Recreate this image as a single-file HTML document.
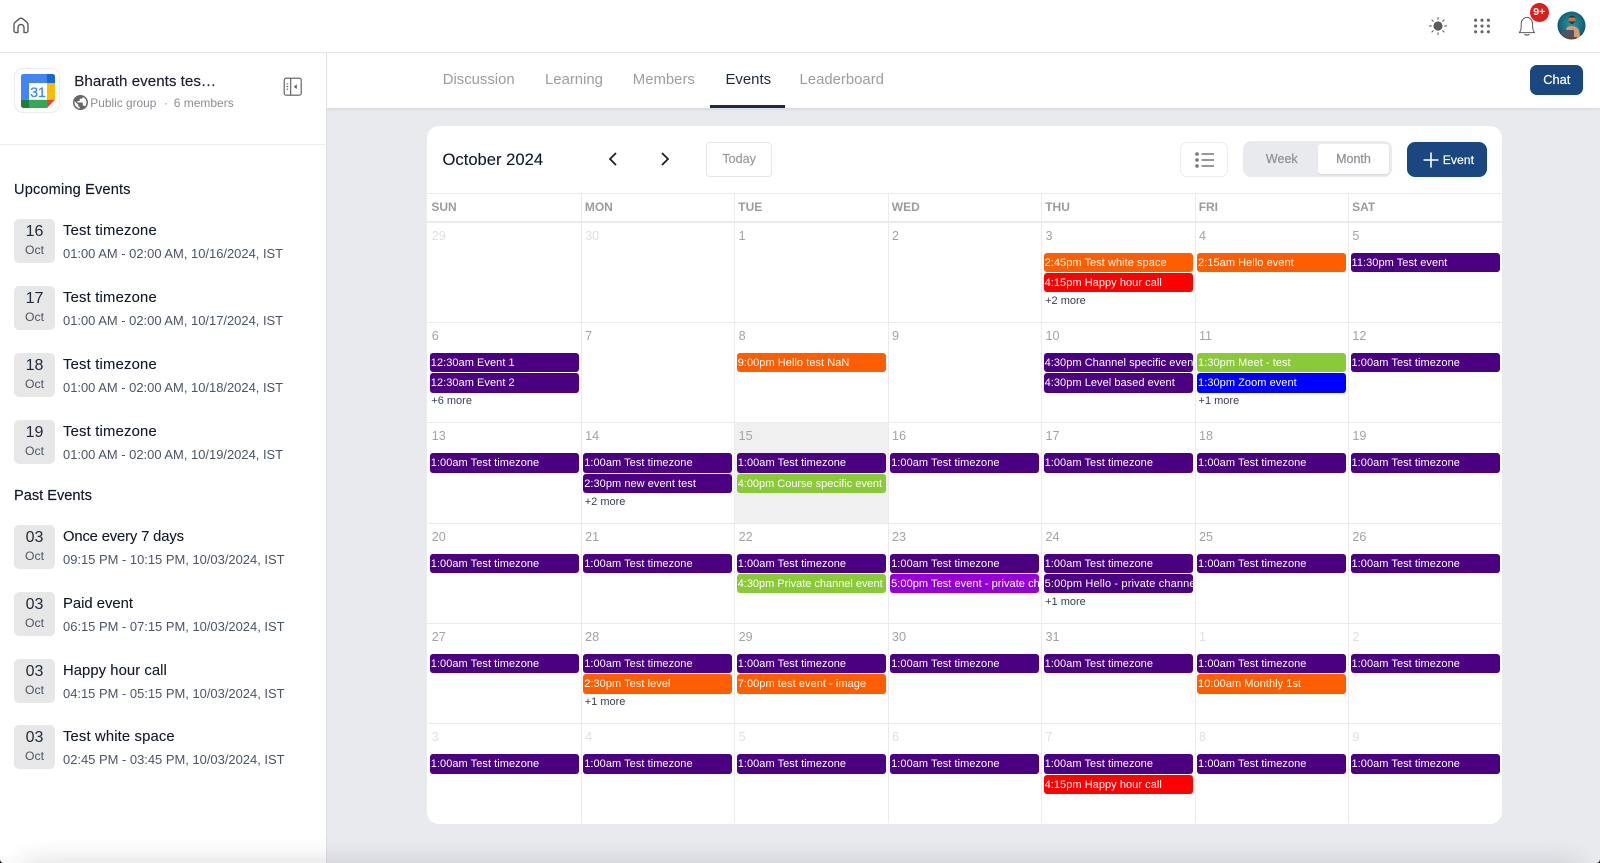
<!DOCTYPE html>
<html lang="en">
<head>
<meta charset="utf-8">
<title>Events</title>
<style>
*{box-sizing:border-box}
html,body{margin:0;padding:0;width:1600px;height:863px;overflow:hidden}
body{background:#e9eaee;position:relative;font-family:"Liberation Sans",sans-serif;color:#111827}
.abs,.abs-t{position:absolute}
.abs-t{white-space:nowrap}
#top{position:absolute;left:0;top:0;width:1600px;height:53px;background:#fff;border-bottom:1px solid #e4e4e6}
#side{position:absolute;left:0;top:53px;width:327px;height:810px;background:#fff;border-right:1px solid #dfe0e3}
#tabs{position:absolute;left:327px;top:53px;width:1273px;height:55px;background:#fff;box-shadow:0 1px 3px rgba(0,0,0,.1)}
.tab{position:absolute;top:79.6px;transform:translateY(-50%);font-size:14.9px;color:#9b9da3;white-space:nowrap}
.hd{position:absolute;left:14px;font-size:14.6px;line-height:18px;color:#111827;-webkit-text-stroke:.15px #111827}
.it{position:absolute;left:14px;width:300px;height:44px}
.it .b{position:absolute;left:0;top:0;width:41px;height:44px;background:#e7e7e8;border-radius:5px;text-align:center}
.it .n{position:absolute;left:0;width:41px;top:3px;font-size:16px;line-height:20px;color:#1f2937}
.it .o{position:absolute;left:0;width:41px;top:24px;font-size:12.2px;line-height:15px;color:#4b5563}
.it .t{position:absolute;left:49px;top:3px;font-size:14.8px;line-height:19px;color:#111827;white-space:nowrap;-webkit-text-stroke:.1px #111827}
.it .t.z{letter-spacing:.2px}
.it .d{position:absolute;left:49px;top:27px;font-size:12.95px;line-height:16px;color:#4b5563;white-space:nowrap}
#card{position:absolute;left:427.4px;top:126px;width:1074.3px;height:697.5px;background:#fff;border-radius:12px;overflow:hidden}
.dow{position:absolute;top:67.2px;height:28.5px;width:153.46px;box-shadow:inset 1px 0 #ebebeb,inset 0 1px #ebebeb,inset 0 -1px #ebebeb;font-size:12px;font-weight:700;color:#9c9c9c;line-height:28px;padding-left:4px}
.dow:first-child{box-shadow:inset 0 1px #ebebeb,inset 0 -1px #ebebeb}
#grid{position:absolute;left:0;top:95.7px;width:1074.3px;display:grid;grid-template-columns:repeat(7,153.46px);grid-auto-rows:100.3px}
.c{position:relative;box-shadow:inset 1px 0 #ebebeb,inset 0 1px #ebebeb;padding:31px 1.9px 0 2.4px;overflow:hidden}
.c:nth-child(7n+1){box-shadow:inset 0 1px #ebebeb}
.c.today{background:#f0f0f0}
.c>b{position:absolute;left:4.3px;top:0;font-weight:400;font-size:12.6px;line-height:28px;color:#a3a3a3}
.c>b.x{color:#e0e0e0}
.e{height:19.4px;line-height:20px;margin-bottom:1px;border-radius:3px;color:#fff;font-size:11px;letter-spacing:.05px;padding-left:1px;white-space:nowrap;overflow:hidden}
.p{background:#4b0082}.g{background:#8aca39}.r{background:#ff0000}.a{background:#ff5e00}.u{background:#0000ff}.v{background:#9400d3}
.m{font-size:11px;line-height:13px;color:#374151;padding-left:1.5px;margin-top:2.5px}
.btn{position:absolute;border-radius:7px}
#clip{position:absolute;left:0;top:0;width:1600px;height:863px;overflow:hidden;pointer-events:none}
#fade{position:absolute;left:22px;width:1556px;top:868px;height:30px;box-shadow:0 0 26px 6px rgba(40,40,60,.16);border-radius:20px}
</style>
</head>
<body>
<div id="tabs"></div>
<div id="top"></div>
<div id="side"></div>

<svg class="abs" style="left:0;top:0" width="44" height="52" viewBox="0 0 44 52"><path d="M18 32.6H16a2 2 0 0 1-2-2V24.6a3 3 0 0 1 1.2-2.4L19.4 18.7a2.6 2.6 0 0 1 3.2 0L26.8 22.2a3 3 0 0 1 1.2 2.4V30.6a2 2 0 0 1-2 2H24V27.5a3 3 0 0 0-6 0Z" fill="none" stroke="#5a5a5a" stroke-width="1.4" stroke-linejoin="round"/></svg>

<svg class="abs" style="left:1427px;top:15px" width="22" height="22" viewBox="0 0 22 22"><circle cx="11" cy="11" r="4.6" fill="#5c5c5c"/><g stroke="#6a6a6a" stroke-width="1.2" stroke-linecap="round"><path d="M11 2.6V4.2M11 17.8V19.4M2.6 11H4.2M17.8 11H19.4M5 5L6.2 6.2M15.8 15.8L17 17M5 17L6.2 15.8M15.8 6.2L17 5"/></g></svg>
<svg class="abs" style="left:1472px;top:15.5px" width="20" height="20" viewBox="0 0 20 20"><g fill="#666"><circle cx="3.6" cy="4.2" r="1.55"/><circle cx="10" cy="4.2" r="1.55"/><circle cx="16.4" cy="4.2" r="1.55"/><circle cx="3.6" cy="10" r="1.55"/><circle cx="10" cy="10" r="1.55"/><circle cx="16.4" cy="10" r="1.55"/><circle cx="3.6" cy="15.8" r="1.55"/><circle cx="10" cy="15.8" r="1.55"/><circle cx="16.4" cy="15.8" r="1.55"/></g></svg>
<svg class="abs" style="left:1514px;top:13px" width="26" height="26" viewBox="0 0 26 26"><path d="M5.3 19.6C6.6 18 7.2 16.7 7.2 13.5V10.8C7.2 7.6 9.7 4.4 12.9 4.4S18.6 7.6 18.6 10.8V13.5C18.6 16.7 19.2 18 20.6 19.6Z" fill="none" stroke="#5c5c5c" stroke-width="1" stroke-linejoin="round"/><path d="M10.8 21.6C11.8 22.1 14 22.1 15 21.6" fill="none" stroke="#5c5c5c" stroke-width="1.2" stroke-linecap="round"/></svg>
<div class="abs" style="left:1529.8px;top:2.5px;width:19px;height:19px;border-radius:50%;background:#db1f1a;color:#fff;font-size:10.5px;font-weight:700;line-height:19px;text-align:center">9+</div>
<svg class="abs" style="left:1557px;top:11px" width="29" height="29" viewBox="0 0 29 29"><defs><radialGradient id="av" cx=".5" cy=".45" r=".6"><stop offset="0" stop-color="#2b96a8"/><stop offset=".75" stop-color="#116478"/><stop offset="1" stop-color="#0d2c3c"/></radialGradient><clipPath id="ac"><circle cx="14.5" cy="14.5" r="14"/></clipPath></defs><circle cx="14.5" cy="14.5" r="14" fill="url(#av)"/><g clip-path="url(#ac)"><path d="M9 29V19C9 16.5 11 15 14.5 15S21 16.5 22 19L24 29Z" fill="#d39a78"/><circle cx="15" cy="8.5" r="3.6" fill="#b9784f"/><path d="M11.2 8C11.2 3.8 18.8 3.6 18.8 8L18 6.5H12Z" fill="#3c2a20"/><path d="M11.8 9.5C12.6 14 17.4 14 18.2 9.5L17 10.5H13Z" fill="#3a2a22"/><rect x="4" y="19" width="13" height="7.5" rx="1" fill="#4a5668"/><rect x="3" y="26" width="17" height="3" fill="#7a3f2a"/></g></svg>

<!-- group header -->
<div class="abs" style="left:14.3px;top:68px;width:45.4px;height:45.4px;background:#fff;border:1px solid #ececec;border-radius:9px"></div>
<svg class="abs" style="left:21px;top:73.7px" width="34" height="34" viewBox="0 0 34 34"><path d="M2.5 0H26V9H8V25.7H0V2.5A2.5 2.5 0 0 1 2.5 0Z" fill="#4285f4"/><path d="M26 0H31.5A2.5 2.5 0 0 1 34 2.5V9H26Z" fill="#1967d2"/><rect x="26" y="9" width="8" height="16.7" fill="#fbbc04"/><rect x="8" y="25.7" width="18" height="8.3" fill="#34a853"/><path d="M0 25.7H8V34H2.5A2.5 2.5 0 0 1 0 31.5Z" fill="#188038"/><path d="M26 25.7H34L26 34Z" fill="#ea4335"/><rect x="8" y="9" width="18" height="16.7" fill="#fff"/><text x="17" y="22.8" text-anchor="middle" font-family="Liberation Sans, sans-serif" font-size="14" font-weight="400" fill="#4285f4" stroke="#4285f4" stroke-width=".3">31</text></svg>
<div class="abs-t" style="left:74.3px;top:72px;font-size:15.2px;line-height:20px;color:#1a1f2b;-webkit-text-stroke:.15px #1a1f2b">Bharath events tes…</div>
<svg class="abs" style="left:73.3px;top:95.3px" width="15" height="15" viewBox="2 2 20 20"><path fill="#666" d="M12 2C6.48 2 2 6.48 2 12s4.48 10 10 10 10-4.48 10-10S17.52 2 12 2zm-1 17.93c-3.95-.49-7-3.85-7-7.93 0-.62.08-1.21.21-1.79L9 15v1c0 1.1.9 2 2 2v1.93zm6.9-2.54c-.26-.81-1-1.39-1.9-1.39h-1v-3c0-.55-.45-1-1-1H8v-2h2c.55 0 1-.45 1-1V7h2c1.1 0 2-.9 2-2v-.41c2.93 1.19 5 4.06 5 7.41 0 2.08-.8 3.97-2.1 5.39z"/></svg>
<div class="abs-t" style="left:90.3px;top:95px;font-size:11.9px;line-height:16px;color:#8a8d93">Public group</div>
<div class="abs-t" style="left:164px;top:95px;font-size:11.9px;line-height:16px;color:#8a8d93">·</div>
<div class="abs-t" style="left:173.7px;top:95px;font-size:12px;line-height:16px;color:#8a8d93">6 members</div>
<svg class="abs" style="left:283px;top:76.5px" width="20" height="20" viewBox="0 0 20 20"><rect x="1.2" y="1.2" width="17" height="17" rx="2" fill="none" stroke="#5a5a5a" stroke-width="1.1"/><path d="M7.7 1.2V18.2" stroke="#5a5a5a" stroke-width="1.1"/><path d="M3.6 7H5.2M3.6 9.6H5.2M3.6 12.2H5.2" stroke="#5a5a5a" stroke-width="1.1"/><path d="M13.8 7.4V12L10.8 9.7Z" fill="#5a5a5a"/></svg>
<div class="abs" style="left:0;top:144px;width:326px;height:1px;background:#ececee"></div>

<div class="hd" style="top:180.5px;letter-spacing:.15px">Upcoming Events</div>
<div class="it" style="top:219px"><div class="b"><div class="n">16</div><div class="o">Oct</div></div><div class="t z">Test timezone</div><div class="d">01:00 AM - 02:00 AM, 10/16/2024, IST</div></div>
<div class="it" style="top:286px"><div class="b"><div class="n">17</div><div class="o">Oct</div></div><div class="t z">Test timezone</div><div class="d">01:00 AM - 02:00 AM, 10/17/2024, IST</div></div>
<div class="it" style="top:353px"><div class="b"><div class="n">18</div><div class="o">Oct</div></div><div class="t z">Test timezone</div><div class="d">01:00 AM - 02:00 AM, 10/18/2024, IST</div></div>
<div class="it" style="top:419.6px"><div class="b"><div class="n">19</div><div class="o">Oct</div></div><div class="t z">Test timezone</div><div class="d">01:00 AM - 02:00 AM, 10/19/2024, IST</div></div>
<div class="hd" style="top:486.5px">Past Events</div>
<div class="it" style="top:525px"><div class="b"><div class="n">03</div><div class="o">Oct</div></div><div class="t" style="letter-spacing:-.15px">Once every 7 days</div><div class="d">09:15 PM - 10:15 PM, 10/03/2024, IST</div></div>
<div class="it" style="top:592px"><div class="b"><div class="n">03</div><div class="o">Oct</div></div><div class="t">Paid event</div><div class="d">06:15 PM - 07:15 PM, 10/03/2024, IST</div></div>
<div class="it" style="top:658.5px"><div class="b"><div class="n">03</div><div class="o">Oct</div></div><div class="t" style="letter-spacing:.07px">Happy hour call</div><div class="d">04:15 PM - 05:15 PM, 10/03/2024, IST</div></div>
<div class="it" style="top:725px"><div class="b"><div class="n">03</div><div class="o">Oct</div></div><div class="t" style="letter-spacing:.15px">Test white space</div><div class="d">02:45 PM - 03:45 PM, 10/03/2024, IST</div></div>

<!-- tabs -->
<div class="tab" style="left:442.7px">Discussion</div>
<div class="tab" style="left:545px">Learning</div>
<div class="tab" style="left:632.8px">Members</div>
<div class="tab" style="left:725.5px;color:#1f2937">Events</div>
<div class="tab" style="left:799.5px">Leaderboard</div>
<div class="abs" style="left:710.3px;top:105px;width:74.5px;height:2.5px;background:#1c2b41"></div>
<div class="btn" style="left:1530.3px;top:65.3px;width:53px;height:29.7px;background:#1a4780;color:#fff;font-size:12.8px;line-height:29px;text-align:center;-webkit-text-stroke:.2px #fff">Chat</div>

<!-- calendar -->
<div id="card">
<div class="dow" style="left:0">SUN</div>
<div class="dow" style="left:153.46px">MON</div>
<div class="dow" style="left:306.92px">TUE</div>
<div class="dow" style="left:460.38px">WED</div>
<div class="dow" style="left:613.84px">THU</div>
<div class="dow" style="left:767.3px">FRI</div>
<div class="dow" style="left:920.76px">SAT</div>
<div id="grid">
<div class="c"><b class="x">29</b></div>
<div class="c"><b class="x">30</b></div>
<div class="c"><b>1</b></div>
<div class="c"><b>2</b></div>
<div class="c"><b>3</b><div class="e a">2:45pm Test white space</div><div class="e r">4:15pm Happy hour call</div><div class="m">+2 more</div></div>
<div class="c"><b>4</b><div class="e a">2:15am Hello event</div></div>
<div class="c"><b>5</b><div class="e p">11:30pm Test event</div></div>

<div class="c"><b>6</b><div class="e p">12:30am Event 1</div><div class="e p">12:30am Event 2</div><div class="m">+6 more</div></div>
<div class="c"><b>7</b></div>
<div class="c"><b>8</b><div class="e a">9:00pm Hello test NaN</div></div>
<div class="c"><b>9</b></div>
<div class="c"><b>10</b><div class="e p">4:30pm Channel specific event</div><div class="e p">4:30pm Level based event</div></div>
<div class="c"><b>11</b><div class="e g">1:30pm Meet - test</div><div class="e u">1:30pm Zoom event</div><div class="m">+1 more</div></div>
<div class="c"><b>12</b><div class="e p">1:00am Test timezone</div></div>

<div class="c"><b>13</b><div class="e p">1:00am Test timezone</div></div>
<div class="c"><b>14</b><div class="e p">1:00am Test timezone</div><div class="e p">2:30pm new event test</div><div class="m">+2 more</div></div>
<div class="c today"><b>15</b><div class="e p">1:00am Test timezone</div><div class="e g" style="letter-spacing:-.02px">4:00pm Course specific event</div></div>
<div class="c"><b>16</b><div class="e p">1:00am Test timezone</div></div>
<div class="c"><b>17</b><div class="e p">1:00am Test timezone</div></div>
<div class="c"><b>18</b><div class="e p">1:00am Test timezone</div></div>
<div class="c"><b>19</b><div class="e p">1:00am Test timezone</div></div>

<div class="c"><b>20</b><div class="e p">1:00am Test timezone</div></div>
<div class="c"><b>21</b><div class="e p">1:00am Test timezone</div></div>
<div class="c"><b>22</b><div class="e p">1:00am Test timezone</div><div class="e g" style="letter-spacing:-.02px">4:30pm Private channel event</div></div>
<div class="c"><b>23</b><div class="e p">1:00am Test timezone</div><div class="e v">5:00pm Test event - private channel</div></div>
<div class="c"><b>24</b><div class="e p">1:00am Test timezone</div><div class="e p" style="letter-spacing:.15px">5:00pm Hello - private channel</div><div class="m">+1 more</div></div>
<div class="c"><b>25</b><div class="e p">1:00am Test timezone</div></div>
<div class="c"><b>26</b><div class="e p">1:00am Test timezone</div></div>

<div class="c"><b>27</b><div class="e p">1:00am Test timezone</div></div>
<div class="c"><b>28</b><div class="e p">1:00am Test timezone</div><div class="e a">2:30pm Test level</div><div class="m">+1 more</div></div>
<div class="c"><b>29</b><div class="e p">1:00am Test timezone</div><div class="e a">7:00pm test event - image</div></div>
<div class="c"><b>30</b><div class="e p">1:00am Test timezone</div></div>
<div class="c"><b>31</b><div class="e p">1:00am Test timezone</div></div>
<div class="c"><b class="x">1</b><div class="e p">1:00am Test timezone</div><div class="e a">10:00am Monthly 1st</div></div>
<div class="c"><b class="x">2</b><div class="e p">1:00am Test timezone</div></div>

<div class="c"><b class="x">3</b><div class="e p">1:00am Test timezone</div></div>
<div class="c"><b class="x">4</b><div class="e p">1:00am Test timezone</div></div>
<div class="c"><b class="x">5</b><div class="e p">1:00am Test timezone</div></div>
<div class="c"><b class="x">6</b><div class="e p">1:00am Test timezone</div></div>
<div class="c"><b class="x">7</b><div class="e p">1:00am Test timezone</div><div class="e r">4:15pm Happy hour call</div></div>
<div class="c"><b class="x">8</b><div class="e p">1:00am Test timezone</div></div>
<div class="c"><b class="x">9</b><div class="e p">1:00am Test timezone</div></div>
</div>
</div>

<div class="abs-t" style="left:442.5px;top:150px;font-size:16.6px;line-height:20px;color:#111827;-webkit-text-stroke:.1px #111827">October 2024</div>
<svg class="abs" style="left:605px;top:150px" width="16" height="18" viewBox="0 0 16 18"><path d="M11 3L5 9L11 15" fill="none" stroke="#1a1f2b" stroke-width="1.8"/></svg>
<svg class="abs" style="left:657px;top:150px" width="16" height="18" viewBox="0 0 16 18"><path d="M5 3L11 9L5 15" fill="none" stroke="#1a1f2b" stroke-width="1.8"/></svg>
<div class="abs" style="left:706px;top:142.3px;width:66.3px;height:34.4px;border:1px solid #e6e6e6;border-radius:4px;color:#96989d;font-size:12.6px;line-height:32px;text-align:center;-webkit-text-stroke:.15px #96989d">Today</div>

<div class="abs" style="left:1180.3px;top:142px;width:48px;height:35px;border:1px solid #ececec;border-radius:7px;background:#fff"></div>
<svg class="abs" style="left:1194px;top:151px" width="22" height="18" viewBox="0 0 22 18"><g fill="#777"><circle cx="3" cy="3" r="1.8"/><circle cx="3" cy="9" r="1.8"/><circle cx="3" cy="15" r="1.8"/></g><path d="M7.5 3H20M7.5 9H20M7.5 15H20" stroke="#777" stroke-width="1.5"/></svg>

<div class="abs" style="left:1243.3px;top:141px;width:148.4px;height:36px;background:#e9eaee;border-radius:8px"></div>
<div class="abs" style="left:1317.7px;top:143.7px;width:71.6px;height:30.3px;background:#fff;border-radius:3px;box-shadow:0 1px 1px rgba(0,0,0,.08)"></div>
<div class="abs-t" style="left:1243.3px;width:77px;text-align:center;top:151px;font-size:12.5px;line-height:16px;color:#8f9196;-webkit-text-stroke:.25px #8f9196">Week</div>
<div class="abs-t" style="left:1317.7px;width:71.6px;text-align:center;top:151px;font-size:12.5px;line-height:16px;color:#8f9196;-webkit-text-stroke:.25px #8f9196">Month</div>

<div class="btn" style="left:1406.7px;top:142px;width:80px;height:35px;background:#1a4780;border-radius:8px"></div>
<svg class="abs" style="left:1422.5px;top:151.5px" width="16" height="16" viewBox="0 0 16 16"><path d="M8 .5V15.5M.5 8H15.5" stroke="#fff" stroke-width="1.6"/></svg>
<div class="abs-t" style="left:1442.7px;top:151.5px;font-size:12.25px;line-height:16px;color:#fff;-webkit-text-stroke:.2px #fff">Event</div>

<div id="clip"><div id="fade"></div>
<div class="abs" style="left:0;top:860px;width:3px;height:3px;background:radial-gradient(circle at 100% 0,transparent 2.5px,#111 3px)"></div>
<div class="abs" style="left:1597px;top:860px;width:3px;height:3px;background:radial-gradient(circle at 0 0,transparent 2.5px,#111 3px)"></div></div>
</body>
</html>
